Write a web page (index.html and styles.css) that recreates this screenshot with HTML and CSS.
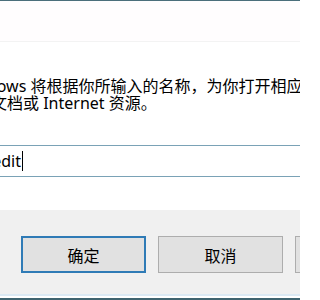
FILE: index.html
```html
<!DOCTYPE html>
<html lang="zh-CN">
<head>
<meta charset="utf-8">
<title>运行</title>
<link rel="stylesheet" href="styles.css">
</head>
<body>
<div class="window">
  <div class="titlebar"></div>
  <div class="content">
    <p class="desc">Windows 将根据你所输入的名称，为你打开相应的程序、文件夹、<br>文档或 Internet 资源。</p>
    <div class="field"><span class="value">regedit</span><span class="caret"></span></div>
  </div>
  <div class="footer">
    <button class="btn btn-default">确定</button>
    <button class="btn">取消</button>
    <button class="btn">浏览(B)...</button>
  </div>
</div>
</body>
</html>
```

FILE: styles.css
```css
html, body {
  margin: 0;
  padding: 0;
  width: 300px;
  height: 300px;
  overflow: hidden;
  background: #ffffff;
}
body {
  font-family: "Noto Sans", "Noto Sans CJK SC", sans-serif;
  color: #000000;
}
.window {
  position: relative;
  width: 300px;
  height: 300px;
  box-sizing: border-box;
  border-top: 1px solid #4b6f7b;
  border-bottom: 2px solid #3e6470;
  display: flex;
  flex-direction: column;
  overflow: hidden;
}
.titlebar {
  height: 40px;
  flex: none;
  background: #fffdfe;
  border-bottom: 1px solid #f3f3f3;
}
.content {
  height: 168px;
  flex: none;
  box-sizing: border-box;
  padding-top: 36px;
  background: #ffffff;
  overflow: hidden;
}
.desc {
  margin: 0 0 0 -9px;
  text-indent: -33px;
  font-size: 16px;
  line-height: 17px;
  white-space: nowrap;
  color: #000000;
}
.field {
  margin: 33px 0 0 -33px;
  width: 360px;
  height: 30px;
  border-top: 1px solid #7aa2b6;
  border-bottom: 1px solid #7aa2b6;
  display: flex;
  align-items: center;
  font-size: 16px;
  line-height: 30px;
  white-space: nowrap;
}
.caret {
  display: inline-block;
  width: 1px;
  height: 20px;
  margin-left: 1px;
  background: #000000;
}
.footer {
  height: 86px;
  flex: none;
  box-sizing: border-box;
  background: #f0f0f0;
  border-bottom: 2px solid #dbe9f3;
  padding: 26px 0 0 21px;
  display: flex;
  gap: 12px;
  align-items: flex-start;
  overflow: hidden;
}
.btn {
  flex: none;
  width: 125px;
  height: 37px;
  box-sizing: border-box;
  margin: 0;
  padding: 0;
  background: #e1e1e1;
  border: 1px solid #adadad;
  font-family: "Noto Sans", "Noto Sans CJK SC", sans-serif;
  font-size: 16px;
  color: #000000;
  white-space: nowrap;
}
.btn-default {
  border: 2px solid #2f7bb6;
}
```
